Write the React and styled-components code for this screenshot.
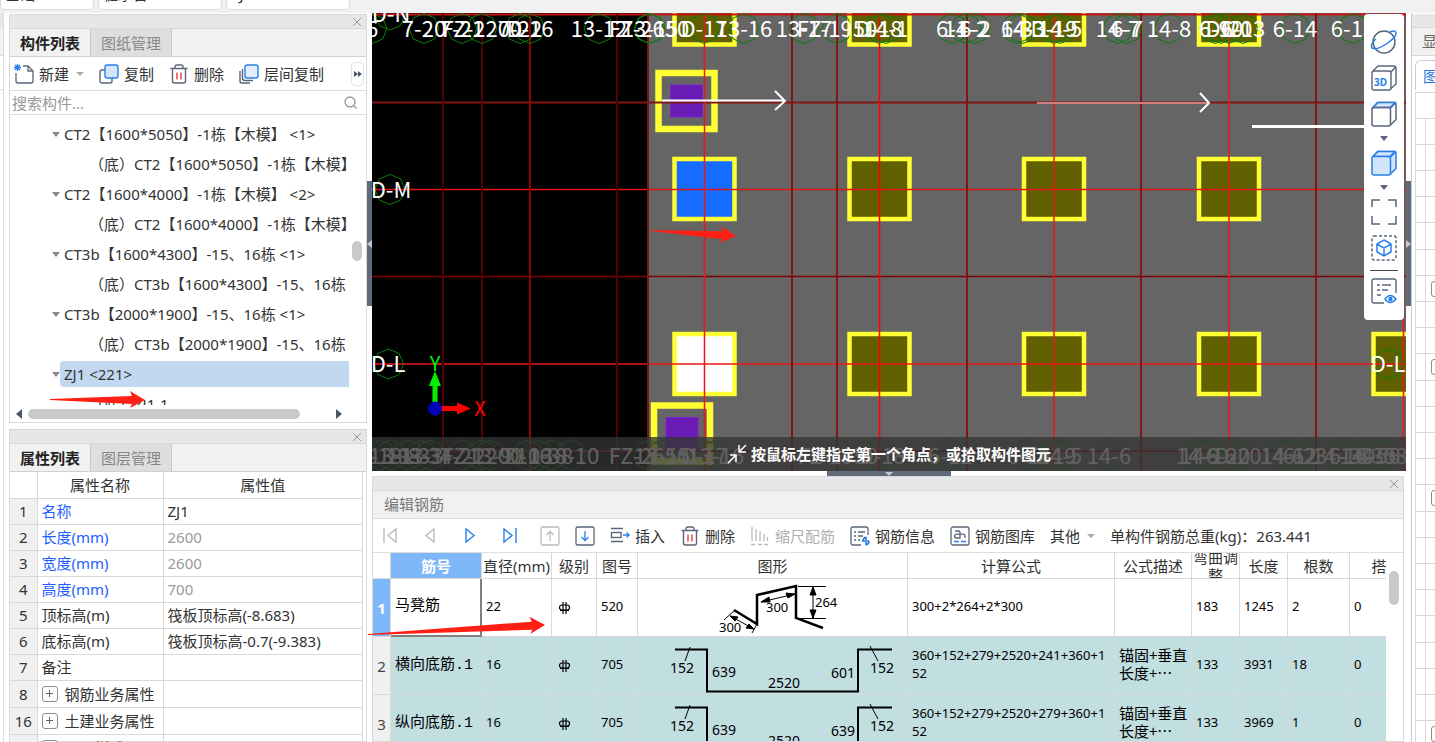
import React from "react";
import styled, { createGlobalStyle } from "styled-components";

const GlobalStyle = createGlobalStyle`
    * {
        box-sizing: border-box;
    }
    body {
        margin: 0;
        overflow: hidden;
        background: #fff;
        color: #333;
        font-family: "Noto Sans", "Noto Sans CJK SC", sans-serif;
        font-size: 15px;
        line-height: 20px;
    }
    button, input, select {
        font: inherit;
        color: inherit;
    }
    svg {
        display: block;
        flex: none;
    }
`;

const Page = styled.div`
    position: relative;
    display: flex;
    flex-direction: column;
    height: 100vh;
    overflow: hidden;
`;

const TopBar = styled.header`
    display: flex;
    flex: none;
    align-items: flex-end;
    gap: 4px;
    height: 13px;
    padding-bottom: 3px;
    overflow: hidden;
    background: #f1f1f1;
`;

const TopSelect = styled.select`
    appearance: none;
    flex: none;
    width: ${(props) => props.$width || 124}px;
    height: 32px;
    padding: 0 4px;
    border: 1px solid #dcdcdc;
    border-radius: 4px;
    background: #fff;
`;

const Workspace = styled.div`
    display: flex;
    flex: 1;
    min-height: 0;
`;

const EdgeStrip = styled.div`
    flex: none;
    width: 4px;
    margin-right: 5px;
    border-right: 1px solid #dcdcdc;
    background: #fff;
`;

const EdgeBlock = styled.div`
    height: ${(props) => props.$height}px;
    border-bottom: 1px solid #dcdcdc;
    background: ${(props) => props.$bg || "#fff"};
`;

const LeftColumn = styled.aside`
    display: flex;
    flex: none;
    flex-direction: column;
    gap: 6px;
    width: 358px;
    padding-top: 1px;
`;

const Panel = styled.section`
    display: flex;
    flex: ${(props) => (props.$fill ? "1" : "none")};
    flex-direction: column;
    min-height: 0;
    border: 1px solid #d9d9d9;
    background: #fff;
`;

const EditPanel = styled(Panel)`
    margin-right: 2px;
`;

const TitleBar = styled.div`
    display: flex;
    flex: none;
    align-items: center;
    justify-content: flex-end;
    height: 14px;
    padding-right: 4px;
    border-bottom: 1px solid #d9d9d9;
    background: #e7e7e7;
`;

const PlainButton = styled.button`
    display: flex;
    flex: none;
    align-items: center;
    justify-content: center;
    gap: 5px;
    padding: 0;
    border: 0;
    background: none;
    white-space: nowrap;
    color: ${(props) => (props.disabled ? "#b0b0b0" : "inherit")};
`;

const Tabs = styled.div`
    display: flex;
    flex: none;
    height: 28px;
    border-bottom: 1px solid #d0d0d0;
    background: #f1f1f1;
`;

const Tab = styled.button`
    width: 81px;
    padding: 0;
    border: 0;
    border-right: 1px solid #c8c8c8;
    background: ${(props) => (props.$active ? "#f1f1f1" : "#dedede")};
    color: ${(props) => (props.$active ? "#222" : "#888")};
    font-weight: ${(props) => (props.$active ? 700 : 400)};
`;

const Toolbar = styled.div`
    display: flex;
    flex: none;
    align-items: center;
    gap: 15px;
    height: 34px;
    padding: 0 2px 0 4px;
    border-bottom: 1px solid #dedede;
    background: #fff;
`;

const Caret = styled.span`
    margin-left: 2px;
    border: 4px solid transparent;
    border-top-color: ${(props) => props.$color || "#aaa"};
    border-bottom: 0;
`;

const MoreButton = styled(PlainButton)`
    width: 13px;
    height: 24px;
    margin-left: auto;
    border: 1px solid #e2e2e2;
    border-radius: 4px;
`;

const SearchRow = styled.label`
    display: flex;
    flex: none;
    align-items: center;
    height: 24px;
    padding: 0 9px 0 2px;
    border-bottom: 1px solid #dedede;
`;

const SearchInput = styled.input`
    flex: 1;
    min-width: 0;
    padding: 0;
    border: 0;
    outline: 0;
    &::placeholder {
        color: #999;
    }
`;

const TreeArea = styled.div`
    display: flex;
    height: 290px;
`;

const TreeList = styled.ul`
    flex: 1;
    min-width: 0;
    margin: 0;
    padding: 4px 0 0;
    overflow: hidden;
    list-style: none;
`;

const TreeRow = styled.li`
    display: flex;
    align-items: center;
    height: 30px;
    padding-left: ${(props) => (props.$child ? 75 : 42)}px;
    white-space: nowrap;
`;

const TreeLabel = styled.span`
    flex: 1;
    min-width: 0;
    height: 26px;
    padding-left: 4px;
    overflow: hidden;
    border-radius: 4px 0 0 4px;
    background: ${(props) => (props.$selected ? "#c2d8f0" : "none")};
    line-height: 26px;
    white-space: pre;
`;

const TreeCaret = styled.span`
    border: 4px solid transparent;
    border-top: 5px solid #8a8a8a;
    border-bottom: 0;
`;

const VTrack = styled.div`
    flex: none;
    width: 17px;
    padding: ${(props) => props.$offset}px 4px 0 3px;
`;

const Thumb = styled.div`
    height: ${(props) => props.$height}px;
    border-radius: 5px;
    background: #c9c9c9;
`;

const HTrack = styled.div`
    display: flex;
    flex: none;
    align-items: center;
    height: 17px;
    padding: 0 24px 0 6px;
`;

const HThumb = styled(Thumb)`
    width: 272px;
    margin: 0 auto 0 6px;
`;

const ScrollArrow = styled.span`
    border: 5px solid transparent;
    border-${(props) => props.$side}: 6px solid #4b5768;
    border-${(props) => (props.$side === "left" ? "right" : "left")}: 0;
`;

const PropTable = styled.table`
    width: 353px;
    border-collapse: collapse;
    table-layout: fixed;
    td, th {
        height: 26px;
        padding: 0 0 0 4px;
        overflow: hidden;
        border-right: 1px solid #d9d9d9;
        border-bottom: 1px solid #d9d9d9;
        font-weight: 400;
        text-align: left;
        white-space: nowrap;
    }
    thead th {
        padding: 0;
        text-align: center;
    }
`;

const PropIndex = styled.th`
    && {
        padding: 0;
        background: #f0f0f0;
        text-align: center;
    }
`;

const PropRow = styled.tr`
    && td {
        height: ${(props) => (props.$group ? 27 : 26)}px;
    }
`;

const PropName = styled.td`
    color: ${(props) => (props.$blue ? "#1f5eff" : "#333")};
`;

const PropValue = styled.td`
    color: ${(props) => (props.$muted ? "#999" : "#333")};
`;

const GroupLabel = styled.span`
    display: flex;
    align-items: center;
    gap: 7px;
`;

const Expander = styled.button`
    display: flex;
    flex: none;
    align-items: center;
    justify-content: center;
    width: 16px;
    height: 16px;
    padding: 0;
    border: 1px solid #8c8c8c;
    border-radius: 3px;
    background: #fff;
`;

const Splitter = styled.div`
    display: flex;
    flex: none;
    justify-content: center;
    width: ${(props) => (props.$flat ? "auto" : "5px")};
    height: ${(props) => (props.$flat ? "5px" : "auto")};
    padding-top: ${(props) => (props.$flat ? 0 : 168)}px;
    background: #fff;
`;

const Grip = styled.div`
    display: flex;
    align-items: center;
    justify-content: center;
    width: ${(props) => (props.$flat ? 124 : 5)}px;
    height: ${(props) => (props.$flat ? 5 : 125)}px;
    background: #5f6b78;
`;

const Center = styled.main`
    display: flex;
    flex: 1;
    flex-direction: column;
    min-width: 0;
`;

const Viewport = styled.div`
    position: relative;
    flex: none;
    height: 458px;
    overflow: hidden;
    background: #000;
`;

const StatusStrip = styled.div`
    position: absolute;
    right: 0;
    bottom: 0;
    left: 0;
    display: flex;
    align-items: center;
    justify-content: center;
    gap: 4px;
    height: 34px;
    background: rgba(52, 52, 52, 0.78);
    color: #fff;
    font-weight: 700;
`;

const ViewTools = styled.nav`
    position: absolute;
    top: 1px;
    right: 2px;
    display: flex;
    flex-direction: column;
    align-items: center;
    width: 40px;
    height: 306px;
    padding-top: 14px;
    border-radius: 4px;
    background: #fff;
`;

const ViewButton = styled(PlainButton)`
    width: 28px;
    height: 28px;
    margin-bottom: ${(props) => (props.$menu ? 0 : 8)}px;
`;

const MenuButton = styled(PlainButton)`
    width: 28px;
    height: 21px;
`;

const ToolLine = styled.hr`
    width: 28px;
    margin: 0 0 6px;
    border: 0;
    border-top: 1px solid #444;
`;

const EditHeading = styled.h2`
    flex: none;
    height: 28px;
    margin: 0;
    padding-left: 11px;
    border-bottom: 1px solid #dedede;
    background: #f1f1f1;
    color: #777;
    font-size: 15px;
    font-weight: 400;
    line-height: 27px;
`;

const EditToolbar = styled(Toolbar)`
    padding-left: 7px;
`;

const NavGroup = styled.div`
    display: flex;
    gap: 20px;
`;

const NavPair = styled.div`
    display: flex;
    gap: 15px;
`;

const TotalWeight = styled.span`
    white-space: nowrap;
`;

const SheetArea = styled.div`
    display: flex;
    flex: 1;
    min-height: 0;
    overflow: hidden;
`;

const SheetClip = styled.div`
    flex: 1;
    min-width: 0;
    overflow: hidden;
`;

const Sheet = styled.table`
    width: 1051px;
    border-collapse: separate;
    border-spacing: 0;
    table-layout: fixed;
    th, td {
        padding: 0;
        border-right: 1px solid #d9d9d9;
        border-bottom: 1px solid #d9d9d9;
        font-weight: 400;
    }
`;

const HeadCell = styled.div`
    display: flex;
    align-items: center;
    justify-content: center;
    height: 25px;
    overflow: hidden;
    line-height: 18px;
    text-align: center;
    background: ${(props) => (props.$active ? "#7fb8fa" : "#fff")};
    color: ${(props) => (props.$active ? "#fff" : "#333")};
    font-weight: ${(props) => (props.$active ? 700 : 400)};
`;

const SheetRow = styled.tr`
    height: 58px;
    background: ${(props) => (props.$tint ? "#c1dee0" : "#fff")};
`;

const RowHead = styled.th`
    background: ${(props) => (props.$active ? "#7fb8fa" : "#f0f0f0")};
    color: ${(props) => (props.$active ? "#fff" : "#444")};
    && {
        font-weight: ${(props) => (props.$active ? 700 : 400)};
    }
`;

const NameCell = styled.td`
    color: #000;
    font-family: "Liberation Mono", "Noto Sans CJK SC", monospace;
    && {
        padding: 0 0 0 4px;
        ${(props) =>
            props.$active &&
            "border-right: 2px solid #808080; border-bottom: 2px solid #808080;"}
    }
`;

const NumCell = styled.td`
    color: #000;
    font-size: 13px;
    line-height: 18px;
    && {
        padding: 0 0 3px 4px;
    }
`;

const GradeCell = styled(NumCell)`
    && {
        padding: 0 0 0 6px;
    }
`;

const DescCell = styled(NumCell)`
    font-family: "Noto Sans CJK SC", sans-serif;
    font-size: 15px;
`;

const RightPanel = styled.aside`
    flex: none;
    width: 24px;
    padding-top: 1px;
    overflow: hidden;
    border-left: 1px solid #c8ccd2;
`;

const RightTitle = styled.div`
    height: 42px;
    padding: 14px 0 0 10px;
    overflow: hidden;
    border-bottom: 1px solid #d9d9d9;
    background: linear-gradient(#e7e7e7 13px, #d9d9d9 13px 14px, #f1f1f1 14px);
    color: #666;
    line-height: 27px;
    white-space: nowrap;
`;

const RightTab = styled.button`
    display: block;
    width: 80px;
    height: 30px;
    margin: 4px 0 2px 3px;
    padding: 0 0 0 7px;
    border: 1px solid #c8ccd2;
    border-bottom: 0;
    border-radius: 6px 6px 0 0;
    background: #fff;
    color: #1f78e0;
    text-align: left;
    white-space: nowrap;
`;

const LayerGrid = styled.ul`
    width: 80px;
    margin: 0 0 0 3px;
    padding: 25px 0 0;
    border: 1px solid #d9d9d9;
    list-style: none;
`;

const LayerRow = styled.li`
    display: flex;
    align-items: center;
    height: 26px;
    padding-left: 15px;
    border-top: 1px solid #d9d9d9;
    background: linear-gradient(90deg, #fff 9px, #d9d9d9 9px 10px, #fff 10px);
    &:nth-child(5n) {
        height: 27px;
    }
`;

const Marks = styled.svg`
    position: absolute;
    top: 0;
    left: 0;
    width: 100%;
    height: 100%;
    pointer-events: none;
`;

const INK = "#59657a";
const BLUE = "#2a7fe8";

const CloseIcon = () => (
    <svg width="10" height="10" stroke="#999" fill="none">
        <path d="M1 1l8 8M9 1l-8 8" />
    </svg>
);

const NewIcon = () => (
    <svg width="20" height="20" fill="none" stroke={INK} strokeWidth="1.3">
        <path d="M2 9v8q0 2 2 2h13q2 0 2-2V7l-5-5H9" />
        <path d="M14 2v5h5" />
        <path d="M1 1l5 5M6 1L1 6M3.500 0v7M0 3.500h7" stroke={BLUE} />
    </svg>
);

const CopyIcon = () => (
    <svg width="20" height="20" fill="#fff" stroke={INK} strokeWidth="1.400">
        <rect x="1" y="6" width="12" height="13" rx="2" />
        <rect x="6" y="1" width="13" height="13" rx="2" stroke={BLUE} fill="#d3e5fb" />
    </svg>
);

const LayerCopyIcon = () => (
    <svg width="20" height="20" fill="none" stroke={INK} strokeWidth="1.400">
        <path d="M1 7v10q0 2 2 2h8M3.500 5v9q0 2.500 2.500 2.500h8" />
        <rect x="6" y="1" width="13" height="13" rx="2" stroke={BLUE} fill="#e1eefd" />
    </svg>
);

const DeleteIcon = () => (
    <svg width="20" height="20" fill="none" stroke={INK} strokeWidth="1.400">
        <path d="M1.500 4.500h17M6 4V3q0-2 2-2h4q2 0 2 2v1M3.500 5v12q0 2 2 2h9q2 0 2-2V5" />
        <path d="M8 8.500v7M12 8.500v7" stroke="#e23c3c" />
    </svg>
);

const MoreIcon = () => (
    <svg width="10" height="8" fill="#4b5768">
        <path d="M1 1l4 3-4 3zM5 1l4 3-4 3z" />
    </svg>
);

const SearchIcon = () => (
    <svg width="13" height="13" fill="none" stroke="#999" strokeWidth="1.300">
        <circle cx="6" cy="6" r="5" />
        <path d="M9.500 9.500l3 3" />
    </svg>
);

const PlusIcon = () => (
    <svg width="7" height="7" stroke="#59657a">
        <path d="M0 3.500h7M3.500 0v7" />
    </svg>
);

const NavIcon = ({ bar, back, disabled }) => (
    <svg width="20" height="20" fill="none" stroke={disabled ? "#bbb" : BLUE} strokeWidth="1.400">
        <g transform={back ? "translate(20 0) scale(-1 1)" : undefined}>
            <path d={bar ? "M4 3v13l8-6.500zM16 2v15" : "M6 3v13l8-6.500z"} />
        </g>
    </svg>
);

const MoveIcon = ({ up }) => (
    <svg width="20" height="20" fill="none" stroke={up ? "#bbb" : INK} strokeWidth="1.300">
        <rect x="1" y="1" width="18" height="18" rx="1.500" />
        <path
            d={up ? "M10 15V6M6.500 9L10 5.500 13.500 9" : "M10 5v9M6.500 11l3.500 3.500 3.500-3.500"}
            stroke={up ? "#bbb" : BLUE}
        />
    </svg>
);

const InsertIcon = () => (
    <svg width="20" height="20" fill="none" stroke={INK} strokeWidth="1.400">
        <path d="M1 2.500h12M1 15.500h12" />
        <rect x="1.500" y="6.500" width="9.500" height="5" />
        <path d="M13 9h6M16.500 6.500L19 9l-2.500 2.500" stroke={BLUE} />
    </svg>
);

const ScaleIcon = () => (
    <svg width="20" height="20" fill="none" stroke="#bbb" strokeWidth="1.300">
        <path d="M2 1v14M6 3v12M10 5v10M14 8v7M17.500 11v4M1 18.500h4M8 18.500h4M14 18.500h4" />
    </svg>
);

const InfoIcon = () => (
    <svg width="20" height="20" fill="none" stroke={INK} strokeWidth="1.300">
        <path d="M11 19H3q-2 0-2-2V3q0-2 2-2h13q2 0 2 2v6" />
        <path d="M4 6h2M8 6h7M4 10h2M8 10h5M4 14h2M8 14h2" />
        <path d="M12 15h7M13 15q0-3 3-4M19 15q0 3-3 4M16 11v3M16 19v-3" stroke={BLUE} strokeWidth="1.600" />
    </svg>
);

const LibraryIcon = () => (
    <svg width="20" height="20" fill="none" stroke={INK} strokeWidth="1.300">
        <rect x="1" y="1" width="18" height="18" rx="2" />
        <path d="M5 5h3.500q1.500 0 1.500 1.500V12H6.500a1.900 1.900 0 0 1 0-3.800H13q2 0 2 2V12" />
        <path d="M4 15.500h5M11 15.500h5" stroke={BLUE} />
    </svg>
);

const OrbitIcon = () => (
    <svg width="28" height="28" fill="none" stroke={INK} strokeWidth="1.500">
        <circle cx="14" cy="14" r="11" />
        <path
            d="M20 4q5-2 6 .5 1 4-9 11T2 20q-2-4 4-9"
            stroke={BLUE}
        />
    </svg>
);

const Cube3DIcon = () => (
    <svg width="28" height="28" fill="none" stroke={INK} strokeWidth="1.400">
        <path d="M2 9q0-2 2-2h15q2 0 2 2v15q0 2-2 2H4q-2 0-2-2zM3 7l5-5h16q2 0 2 2v16l-5.500 5M21 8l5-5.500" />
        <text x="4" y="22" fill={BLUE} stroke="none" fontSize="10" fontWeight="700">
            3D
        </text>
    </svg>
);

const CubeIcon = ({ solid }) => (
    <svg width="28" height="28" fill={solid ? "#d3e5fb" : "none"} stroke={solid ? BLUE : INK} strokeWidth="1.500">
        <path d="M2.500 8l5-5.500H24q2 0 2 2v15L20.500 25M20.500 8l5-5" />
        <path d="M3 7.500l5-5h17l-5 5z" stroke={BLUE} fill="#d3e5fb" />
        <rect x="2" y="7.500" width="18.500" height="18.500" rx="2" />
    </svg>
);

const FitIcon = () => (
    <svg width="28" height="28" fill="none" stroke={INK} strokeWidth="1.500">
        <path d="M2 9V2h8M18 2h8v7M26 18v8h-8M10 26H2v-8" />
    </svg>
);

const IsolateIcon = () => (
    <svg width="28" height="28" fill="none" stroke={INK} strokeWidth="1.500">
        <rect x="2" y="2" width="24" height="24" rx="2" strokeDasharray="3 2" />
        <path d="M14 6l7 4v8l-7 4-7-4v-8zM7.500 10.500L14 14l6.500-3.500M14 14v8" stroke={BLUE} />
    </svg>
);

const DisplayIcon = () => (
    <svg width="28" height="28" fill="none" stroke={INK} strokeWidth="1.400">
        <path d="M14 26H4q-2 0-2-2V4q0-2 2-2h20q2 0 2 2v12M7 8h3M12 8h9M7 13h3M12 13h6M7 18h4" />
        <path d="M15 22q5-7 11 0-6 7-11 0z" stroke={BLUE} />
        <circle cx="20.500" cy="22" r="1.500" stroke={BLUE} fill={BLUE} />
    </svg>
);

const MenuIcon = () => (
    <svg width="8" height="6" fill={INK}>
        <path d="M0 0h8L4 5z" />
    </svg>
);

const PickIcon = () => (
    <svg width="20" height="20" fill="none" stroke="#fff" strokeWidth="1.500">
        <path d="M19 1l-7 7M12 1v7h7M1 19l8-8M3 11h6v7" />
    </svg>
);

const GradeIcon = () => (
    <svg width="14" height="14" fill="none" stroke="#000" strokeWidth="1.200">
        <rect x="1.500" y="4" width="10" height="5" rx="2.500" />
        <path d="M5 1v12M8 1v12M2 9.500h9" />
    </svg>
);

const gridColumns = [
    [443, "#500000", 2],
    [482, "#500000", 2],
    [530, "#900000", 2],
    [617, "#500000", 2],
    [648, "#7a1515", 2],
    [704.5, "#f01414", 1.5],
    [792, "#821414", 2],
    [837, "#821414", 2],
    [879.5, "#ff0000", 1.5],
    [967, "#821414", 2],
    [1054, "#e81818", 1.5],
    [1141, "#821414", 2],
    [1229, "#e81818", 1.5],
    [1316, "#821414", 2],
    [1403.5, "#e81818", 1.5],
];

const gridRows = [
    [14.5, "#c81414", 2],
    [102.5, "#821414", 2],
    [189.5, "#e01414", 1.5],
    [276.5, "#800000", 1.5],
    [364, "#f01414", 1.5],
    [451, "#821414", 2],
];

const topLabels = [
    [372, "6"],
    [424, "7-20"],
    [462, "7-21"],
    [482, "FZ-2200"],
    [520, "7-22"],
    [530, "D-16"],
    [599, "13-12"],
    [649, "FZ-2650"],
    [650, "13-15"],
    [704, "D-17"],
    [744, "13-16"],
    [804, "13-17"],
    [837, "FZ-1950"],
    [879, "D-18"],
    [886, "14-1"],
    [952, "6-1"],
    [966, "14-2"],
    [975, "6-2"],
    [1017, "6-3"],
    [1023, "14-3"],
    [1054, "D-19"],
    [1060, "14-5"],
    [1118, "14-7"],
    [1127, "6-7"],
    [1169, "14-8"],
    [1215, "6-9"],
    [1221, "6-10"],
    [1229, "D-20"],
    [1243, "6-13"],
    [1295, "6-14"],
    [1353, "6-15"],
];

const bottomLabels = [
    [380, "6-18"],
    [391, "13-1"],
    [408, "19-3"],
    [421, "13-3"],
    [430, "8-34"],
    [462, "7-21"],
    [482, "FZ-2200"],
    [490, "13-9"],
    [528, "D-16"],
    [538, "10-3"],
    [551, "13-8"],
    [571, "18-10"],
    [649, "FZ-2650"],
    [662, "13-15"],
    [704, "D-17"],
    [716, "13-16"],
    [838, "FZ-1950"],
    [882, "D-18"],
    [950, "6-12"],
    [1029, "6-14"],
    [1053, "D-19"],
    [1060, "14-5"],
    [1109, "14-6"],
    [1198, "14-9"],
    [1208, "14-16"],
    [1228, "6-20"],
    [1238, "D-20"],
    [1282, "14-6"],
    [1289, "14-12"],
    [1305, "6-23"],
    [1340, "14-15"],
    [1351, "6-34"],
    [1368, "14-35"],
    [1378, "6-56"],
    [1384, "D-08"],
];

const Marker = ({ x, y }) => (
    <polygon
        points={[0, 1, 2, 3, 4, 5, 6, 7]
            .map((i) => {
                const angle = (i * Math.PI) / 4;
                return `${x + 15 * Math.sin(angle)},${y - 15 * Math.cos(angle)}`;
            })
            .join(" ")}
        fill="none"
        stroke="#0a7d0a"
    />
);

const Footing = ({ x, y, fill = "#606000" }) => (
    <rect x={x - 30} y={y - 30} width="60" height="60" fill={fill} stroke="#ffff33" strokeWidth="4.500" />
);

const Pit = ({ x, y }) => (
    <g>
        <rect x={x - 28} y={y - 28} width="56" height="56" fill="#656565" stroke="#ffff33" strokeWidth="6.500" />
        <rect x={x - 16} y={y - 16} width="32" height="32" fill="#6a1bb5" stroke="#7a22d0" />
    </g>
);

const Drawing = () => (
    <svg width="100%" height="100%" fontFamily="'Noto Sans CJK SC', sans-serif" fontSize="22">
        <g transform="translate(-372 -13)">
            <rect x="648" y="13" width="2000" height="460" fill="#656565" />
            {[704.5, 879.5, 1054, 1229].map((x) => (
                <Footing key={x} x={x} y={14.5} />
            ))}
            {[879.5, 1054, 1229].map((x) => (
                <Footing key={x} x={x} y={189} />
            ))}
            {[879.5, 1054, 1229, 1403.5].map((x) => (
                <Footing key={x} x={x} y={364} />
            ))}
            <Footing x={704.5} y={189} fill="#146dff" />
            <Footing x={704.5} y={364} fill="#fff" />
            <Pit x={686.5} y={101} />
            <Pit x={682} y={433.5} />
            {gridRows.map(([y, color, width]) => (
                <path key={y} d={`M372 ${y}h2000`} stroke={color} strokeWidth={width} />
            ))}
            {gridColumns.map(([x, color, width]) => (
                <path key={x} d={`M${x} 13v460`} stroke={color} strokeWidth={width} />
            ))}
            <g fill="none" stroke="#fff" strokeWidth="2">
                <path d="M662 100.500h122M775 91l10 10-10 9" />
                <path d="M1037 103h172" stroke="#cf8080" />
                <path d="M1200 93l9 10-9 9" />
                <path d="M1252 126.500h130" strokeWidth="3" />
            </g>
            {topLabels.map(([x, label]) => (
                <Marker key={label + x} x={x} y={28.5} />
            ))}
            {bottomLabels.map(([x, label]) => (
                <Marker key={label + x} x={x} y={455} />
            ))}
            <Marker x={390} y={15} />
            <Marker x={390} y={189.5} />
            <Marker x={388.5} y={364} />
            <Marker x={1389} y={364} />
            <g fill="#fff" textAnchor="middle">
                {topLabels.map(([x, label]) => (
                    <text key={label + x} x={x} y="37">
                        {label}
                    </text>
                ))}
                {bottomLabels.map(([x, label]) => (
                    <text key={label + x} x={x} y="464">
                        {label}
                    </text>
                ))}
                <text x="391" y="22">D-N</text>
                <text x="391" y="198">D-M</text>
                <text x="388" y="372">D-L</text>
                <text x="1388" y="372">D-L</text>
            </g>
            <path d="M435 404v-20" stroke="#00f000" strokeWidth="5" />
            <path d="M435 371l6 15h-12z" fill="#00f000" />
            <path d="M440 408.500h18" stroke="#f00" strokeWidth="5" />
            <path d="M471 408.500l-14 6v-12z" fill="#f00" />
            <circle cx="435" cy="408.500" r="7" fill="#0000b8" />
            <g textAnchor="middle" fontSize="20">
                <text x="435" y="371" fill="#00f000">Y</text>
                <text x="480" y="416" fill="#f00">X</text>
            </g>
        </g>
    </svg>
);

const StoolShape = () => (
    <svg width="269" height="56" fill="none" stroke="#000" fontSize="13">
        <path d="M96 30l23 14V15l39-9v32l27 10" strokeWidth="2.500" />
        <path d="M160 6.500h28M160 38.500h28M175 7v31M123 22l34-8M92 36l24 13M97 30L86 40M119 44l-5 9" />
        <path
            d="M175 7l-3 8h6zM175 38l-3-8h6zM123 22l8-5 1 5zM157 14l-9-1 2 5zM92 36l8 1-3 4zM116 49l-8-1 3-4z"
            fill="#000"
        />
        <g fill="#000" stroke="none">
            <text x="128" y="32">300</text>
            <text x="81" y="52">300</text>
            <text x="177" y="27">264</text>
        </g>
    </svg>
);

const HookShape = ({ left, right }) => (
    <svg width="269" height="57" fill="none" stroke="#000" fontSize="14">
        <path d="M37 12.500h32v42h151v-42h34" strokeWidth="2" />
        <path d="M52 10l-5 14M232 9l8 15" />
        <g fill="#000" stroke="none">
            <text x="32" y="36">152</text>
            <text x="74" y="40">{left}</text>
            <text x="130" y="51">2520</text>
            <text x="193" y="41">{right}</text>
            <text x="232" y="36">152</text>
        </g>
    </svg>
);

const RedArrow = ({ x1, y1, x2, y2 }) => {
    const len = Math.hypot(x2 - x1, y2 - y1);
    const angle = (Math.atan2(y2 - y1, x2 - x1) * 180) / Math.PI;
    return (
        <path
            transform={`translate(${x1} ${y1}) rotate(${angle})`}
            d={`M0-1L${len - 13}-4l-2-5L${len} 0l-15 8 2-4L0 0z`}
            fill="#ff1f14"
        />
    );
};

const treeItems = [
    { label: "CT2【1600*5050】-1栋【木模】 <1>" },
    { label: "（底）CT2【1600*5050】-1栋【木模】", child: true },
    { label: "CT2【1600*4000】-1栋【木模】 <2>" },
    { label: "（底）CT2【1600*4000】-1栋【木模】", child: true },
    { label: "CT3b【1600*4300】-15、16栋 <1>" },
    { label: "（底）CT3b【1600*4300】-15、16栋", child: true },
    { label: "CT3b【2000*1900】-15、16栋 <1>" },
    { label: "（底）CT3b【2000*1900】-15、16栋", child: true },
    { label: "ZJ1 <221>", selected: true },
    { label: "（底）ZJ1-1", child: true },
];

const properties = [
    { index: 1, name: "名称", value: "ZJ1", blue: true },
    { index: 2, name: "长度(mm)", value: "2600", blue: true, muted: true },
    { index: 3, name: "宽度(mm)", value: "2600", blue: true, muted: true },
    { index: 4, name: "高度(mm)", value: "700", blue: true, muted: true },
    { index: 5, name: "顶标高(m)", value: "筏板顶标高(-8.683)" },
    { index: 6, name: "底标高(m)", value: "筏板顶标高-0.7(-9.383)" },
    { index: 7, name: "备注", value: "" },
    { index: 8, name: "钢筋业务属性", group: true },
    { index: 16, name: "土建业务属性", group: true },
    { index: 22, name: "显示样式", group: true },
];

const sheetColumns = [
    ["筋号", 91],
    ["直径(mm)", 70],
    ["级别", 45],
    ["图号", 41],
    ["图形", 270],
    ["计算公式", 207],
    ["公式描述", 77],
    ["弯曲调整", 48],
    ["长度", 48],
    ["根数", 62],
    ["搭接", 74],
];

const rebars = [
    {
        name: "马凳筋",
        size: 22,
        shape: 520,
        figure: <StoolShape />,
        formula: ["300+2*264+2*300"],
        desc: [],
        bend: 183,
        length: 1245,
        count: 2,
    },
    {
        name: "横向底筋.1",
        size: 16,
        shape: 705,
        figure: <HookShape left="639" right="601" />,
        formula: ["360+152+279+2520+241+360+1", "52"],
        desc: ["锚固+垂直", "长度+⋯"],
        bend: 133,
        length: 3931,
        count: 18,
    },
    {
        name: "纵向底筋.1",
        size: 16,
        shape: 705,
        figure: <HookShape left="639" right="639" />,
        formula: ["360+152+279+2520+279+360+1", "52"],
        desc: ["锚固+垂直", "长度+⋯"],
        bend: 133,
        length: 3969,
        count: 1,
    },
];

const Lines = ({ items }) => items.map((line) => <div key={line}>{line}</div>);

const ComponentPanel = () => (
    <Panel>
        <TitleBar>
            <PlainButton aria-label="关闭">
                <CloseIcon />
            </PlainButton>
        </TitleBar>
        <Tabs>
            <Tab $active>构件列表</Tab>
            <Tab>图纸管理</Tab>
        </Tabs>
        <Toolbar>
            <PlainButton>
                <NewIcon />
                新建
                <Caret />
            </PlainButton>
            <PlainButton>
                <CopyIcon />
                复制
            </PlainButton>
            <PlainButton>
                <DeleteIcon />
                删除
            </PlainButton>
            <PlainButton>
                <LayerCopyIcon />
                层间复制
            </PlainButton>
            <MoreButton aria-label="更多">
                <MoreIcon />
            </MoreButton>
        </Toolbar>
        <SearchRow>
            <SearchInput placeholder="搜索构件..." aria-label="搜索构件" />
            <SearchIcon />
        </SearchRow>
        <TreeArea>
            <TreeList>
                {treeItems.map((item) => (
                    <TreeRow key={item.label} $child={item.child}>
                        {!item.child && <TreeCaret />}
                        <TreeLabel $selected={item.selected}>{item.label}</TreeLabel>
                    </TreeRow>
                ))}
            </TreeList>
            <VTrack $offset={126}>
                <Thumb $height={20} />
            </VTrack>
        </TreeArea>
        <HTrack>
            <ScrollArrow $side="right" />
            <HThumb $height={10} />
            <ScrollArrow $side="left" />
        </HTrack>
    </Panel>
);

const PropertyPanel = () => (
    <Panel $fill>
        <TitleBar>
            <PlainButton aria-label="关闭">
                <CloseIcon />
            </PlainButton>
        </TitleBar>
        <Tabs>
            <Tab $active>属性列表</Tab>
            <Tab>图层管理</Tab>
        </Tabs>
        <PropTable>
            <colgroup>
                <col width="27" />
                <col width="126" />
                <col />
            </colgroup>
            <thead>
                <tr>
                    <th />
                    <th>属性名称</th>
                    <th>属性值</th>
                </tr>
            </thead>
            <tbody>
                {properties.map((item) => (
                    <PropRow key={item.index} $group={item.group}>
                        <PropIndex>{item.index}</PropIndex>
                        <PropName $blue={item.blue}>
                            {item.group ? (
                                <GroupLabel>
                                    <Expander aria-label="展开">
                                        <PlusIcon />
                                    </Expander>
                                    {item.name}
                                </GroupLabel>
                            ) : (
                                item.name
                            )}
                        </PropName>
                        <PropValue $muted={item.muted}>{item.value}</PropValue>
                    </PropRow>
                ))}
            </tbody>
        </PropTable>
    </Panel>
);

const CadView = () => (
    <Viewport>
        <Drawing />
        <StatusStrip>
            <PickIcon />
            按鼠标左键指定第一个角点，或拾取构件图元
        </StatusStrip>
        <ViewTools>
            <ViewButton aria-label="动态观察">
                <OrbitIcon />
            </ViewButton>
            <ViewButton aria-label="三维">
                <Cube3DIcon />
            </ViewButton>
            <ViewButton aria-label="俯视" $menu>
                <CubeIcon />
            </ViewButton>
            <MenuButton aria-label="视图选项">
                <MenuIcon />
            </MenuButton>
            <ViewButton aria-label="实体" $menu>
                <CubeIcon solid />
            </ViewButton>
            <MenuButton aria-label="显示模式">
                <MenuIcon />
            </MenuButton>
            <ViewButton aria-label="全屏">
                <FitIcon />
            </ViewButton>
            <ViewButton aria-label="局部三维">
                <IsolateIcon />
            </ViewButton>
            <ToolLine />
            <ViewButton aria-label="显示设置">
                <DisplayIcon />
            </ViewButton>
        </ViewTools>
    </Viewport>
);

const RebarPanel = () => (
    <EditPanel $fill>
        <TitleBar>
            <PlainButton aria-label="关闭">
                <CloseIcon />
            </PlainButton>
        </TitleBar>
        <EditHeading>编辑钢筋</EditHeading>
        <EditToolbar>
            <NavGroup>
                <PlainButton disabled aria-label="首条">
                    <NavIcon bar back disabled />
                </PlainButton>
                <PlainButton disabled aria-label="上一条">
                    <NavIcon back disabled />
                </PlainButton>
                <PlainButton aria-label="下一条">
                    <NavIcon />
                </PlainButton>
                <PlainButton aria-label="末条">
                    <NavIcon bar />
                </PlainButton>
                <NavPair>
                    <PlainButton disabled aria-label="上移">
                        <MoveIcon up />
                    </PlainButton>
                    <PlainButton aria-label="下移">
                        <MoveIcon />
                    </PlainButton>
                </NavPair>
            </NavGroup>
            <PlainButton>
                <InsertIcon />
                插入
            </PlainButton>
            <PlainButton>
                <DeleteIcon />
                删除
            </PlainButton>
            <PlainButton disabled>
                <ScaleIcon />
                缩尺配筋
            </PlainButton>
            <PlainButton>
                <InfoIcon />
                钢筋信息
            </PlainButton>
            <PlainButton>
                <LibraryIcon />
                钢筋图库
            </PlainButton>
            <PlainButton>
                其他
                <Caret />
            </PlainButton>
            <TotalWeight>单构件钢筋总重(kg)：263.441</TotalWeight>
        </EditToolbar>
        <SheetArea>
            <SheetClip>
                <Sheet>
                    <colgroup>
                        <col width="18" />
                        {sheetColumns.map(([title, width]) => (
                            <col key={title} width={width} />
                        ))}
                    </colgroup>
                    <thead>
                        <tr>
                            <th />
                            {sheetColumns.map(([title], i) => (
                                <th key={title}>
                                    <HeadCell $active={i === 0}>{title}</HeadCell>
                                </th>
                            ))}
                        </tr>
                    </thead>
                    <tbody>
                        {rebars.map((bar, i) => (
                            <SheetRow key={bar.name} $tint={i > 0}>
                                <RowHead $active={i === 0}>{i + 1}</RowHead>
                                <NameCell $active={i === 0}>{bar.name}</NameCell>
                                <NumCell>{bar.size}</NumCell>
                                <GradeCell>
                                    <GradeIcon />
                                </GradeCell>
                                <NumCell>{bar.shape}</NumCell>
                                <td>{bar.figure}</td>
                                <NumCell>
                                    <Lines items={bar.formula} />
                                </NumCell>
                                <DescCell>
                                    <Lines items={bar.desc} />
                                </DescCell>
                                <NumCell>{bar.bend}</NumCell>
                                <NumCell>{bar.length}</NumCell>
                                <NumCell>{bar.count}</NumCell>
                                <NumCell>0</NumCell>
                            </SheetRow>
                        ))}
                    </tbody>
                </Sheet>
            </SheetClip>
            <VTrack $offset={18}>
                <Thumb $height={34} />
            </VTrack>
        </SheetArea>
    </EditPanel>
);

const GripArrow = ({ d }) => (
    <svg width="5" height="8" fill="#c3c9d0">
        <path d={d} />
    </svg>
);

const expandable = [6, 9, 14, 23];

const App = () => (
    <Page lang="zh-CN">
        <GlobalStyle />
        <TopBar>
            <TopSelect $width={94} aria-label="楼层">
                <option>基础</option>
            </TopSelect>
            <TopSelect aria-label="构件类型">
                <option>桩承台</option>
            </TopSelect>
            <TopSelect aria-label="构件">
                <option>ZJ1</option>
            </TopSelect>
        </TopBar>
        <Workspace>
            <EdgeStrip>
                <EdgeBlock $height={15} $bg="#e7e7e7" />
                <EdgeBlock $height={28} $bg="#f1f1f1" />
                <EdgeBlock $height={34} />
            </EdgeStrip>
            <LeftColumn>
                <ComponentPanel />
                <PropertyPanel />
            </LeftColumn>
            <Splitter>
                <Grip>
                    <GripArrow d="M5 0v8L0 4z" />
                </Grip>
            </Splitter>
            <Center>
                <CadView />
                <Splitter $flat>
                    <Grip $flat>
                        <svg width="8" height="5" fill="#c3c9d0">
                            <path d="M0 1h8L4 5z" />
                        </svg>
                    </Grip>
                </Splitter>
                <RebarPanel />
            </Center>
            <Splitter>
                <Grip>
                    <GripArrow d="M0 0v8l5-4z" />
                </Grip>
            </Splitter>
            <RightPanel>
                <RightTitle>显示设置</RightTitle>
                <RightTab>图元显示</RightTab>
                <LayerGrid>
                    {Array.from({ length: 24 }, (_, i) => (
                        <LayerRow key={i}>
                            {expandable.includes(i) && <Expander aria-label="展开" />}
                        </LayerRow>
                    ))}
                </LayerGrid>
            </RightPanel>
        </Workspace>
        <Marks>
            <RedArrow x1={50} y1={400} x2={145} y2={400} />
            <RedArrow x1={651} y1={231} x2={736} y2={236} />
            <RedArrow x1={368} y1={635} x2={545} y2={625} />
        </Marks>
    </Page>
);

export default App;
